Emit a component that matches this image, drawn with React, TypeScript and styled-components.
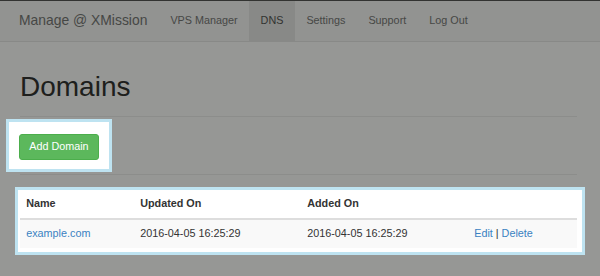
import React from 'react';
import styled, { createGlobalStyle } from 'styled-components';

interface DomainRow {
  name: string;
  updatedOn: string;
  addedOn: string;
}

const domains: DomainRow[] = [
  { name: 'example.com', updatedOn: '2016-04-05 16:25:29', addedOn: '2016-04-05 16:25:29' },
];

const navItems = ['VPS Manager', 'DNS', 'Settings', 'Support', 'Log Out'];

const GlobalStyle = createGlobalStyle`
  html, body {
    margin: 0;
    padding: 0;
    background: #ffffff;
  }
  body {
    font-family: "Liberation Sans", Arial, sans-serif;
    font-size: 10.8px;
    line-height: 1.42857;
    color: #333333;
    border-top: 1px solid #555555;
    overflow: hidden;
  }
`;

const Navbar = styled.nav`
  display: flex;
  align-items: stretch;
  height: 40px;
  padding-left: 7.5px;
  background: #f8f8f8;
  border-bottom: 1px solid #e7e7e7;
`;

const Brand = styled.a`
  display: flex;
  align-items: center;
  padding: 0 11.5px;
  font-size: 13.9px;
  color: #777777;
  text-decoration: none;
`;

const NavLink = styled.a<{ $active?: boolean }>`
  display: flex;
  align-items: center;
  padding: 0 11.5px;
  font-size: 10.8px;
  color: ${p => (p.$active ? '#555555' : '#777777')};
  background: ${p => (p.$active ? '#e7e7e7' : 'transparent')};
  text-decoration: none;
`;

const Container = styled.main`
  padding: 0 23px 0 20px;
`;

const PageHeader = styled.div`
  margin-top: 30px;
  padding-bottom: 13px;
  border-bottom: 1px solid #eeeeee;
`;

const Title = styled.h1`
  margin: 0;
  font-size: 28px;
  font-weight: 500;
  line-height: 1.1;
  color: #333333;
`;

const Highlight = styled.div`
  position: relative;
  z-index: 11;
  background: #ffffff;
  border: 3px solid #bee3f1;
`;

const ButtonHighlight = styled(Highlight)`
  display: inline-block;
  margin: 2px 0 0 -14px;
  padding: 12px 10px 9px;
`;

const TableHighlight = styled(Highlight)`
  margin: 0 -8px 0 -5px;
  padding: 0 5px 4px 2px;
`;

const Rule = styled.hr`
  margin: 2px 0 12px;
  border: 0;
  border-top: 1px solid #eeeeee;
`;

const SuccessButton = styled.button`
  display: block;
  padding: 4.5px 9.2px;
  font-family: inherit;
  font-size: 10.8px;
  line-height: 1.42857;
  color: #ffffff;
  background: #5cb85c;
  border: 1px solid #4cae4c;
  border-radius: 3px;
`;

const Table = styled.table`
  width: 100%;
  border-collapse: collapse;
  table-layout: fixed;
`;

const Th = styled.th<{ $w?: number }>`
  box-sizing: border-box;
  width: ${p => (p.$w ? `${p.$w}px` : 'auto')};
  padding: 6.2px;
  text-align: left;
  font-weight: bold;
  border-bottom: 2px solid #dddddd;
`;

const StripedRow = styled.tr`
  background: #f9f9f9;
`;

const Td = styled.td`
  padding: 6.2px;
  border-top: 1px solid #dddddd;
`;

const Link = styled.a`
  color: #3a82c2;
  text-decoration: none;
`;

const Overlay = styled.div`
  position: fixed;
  inset: 0;
  z-index: 10;
  background: rgba(2, 4, 0, 0.415);
`;

const App: React.FC = () => (
  <>
    <GlobalStyle />
    <Navbar>
      <Brand href="#">Manage @ XMission</Brand>
      {navItems.map(item => (
        <NavLink key={item} href="#" $active={item === 'DNS'}>
          {item}
        </NavLink>
      ))}
    </Navbar>
    <Container>
      <PageHeader>
        <Title>Domains</Title>
      </PageHeader>
      <ButtonHighlight>
        <SuccessButton>Add Domain</SuccessButton>
      </ButtonHighlight>
      <Rule />
      <TableHighlight>
        <Table>
          <thead>
            <tr>
              <Th $w={114}>Name</Th>
              <Th $w={167}>Updated On</Th>
              <Th $w={167}>Added On</Th>
              <Th />
            </tr>
          </thead>
          <tbody>
            {domains.map(d => (
              <StripedRow key={d.name}>
                <Td><Link href="#">{d.name}</Link></Td>
                <Td>{d.updatedOn}</Td>
                <Td>{d.addedOn}</Td>
                <Td>
                  <Link href="#">Edit</Link> | <Link href="#">Delete</Link>
                </Td>
              </StripedRow>
            ))}
          </tbody>
        </Table>
      </TableHighlight>
    </Container>
    <Overlay />
  </>
);

export default App;
